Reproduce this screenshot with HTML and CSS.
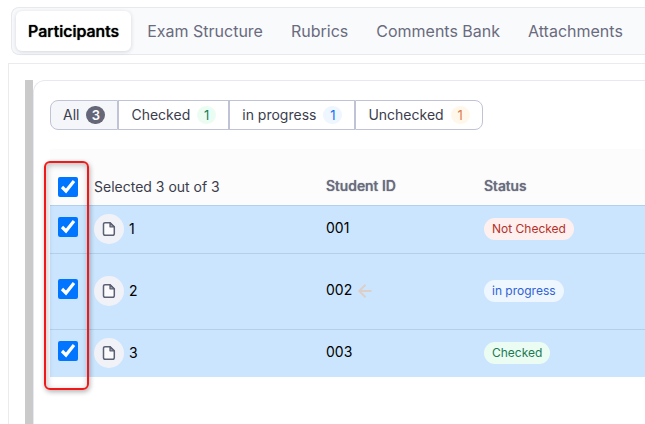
FILE: index.html
```html
<!DOCTYPE html>
<html lang="en">
<head>
<meta charset="utf-8">
<title>Participants</title>
<link rel="stylesheet" href="styles.css">
</head>
<body>
<svg class="sprite" aria-hidden="true">
  <symbol id="file" viewBox="0 0 14 16">
    <path d="M3 1.700h5l4.300 4.300v6.800a1.500 1.500 0 0 1-1.500 1.500H3a1.500 1.500 0 0 1-1.500-1.500V3.200A1.500 1.500 0 0 1 3 1.700z" fill="#fbfbfd" stroke="#5c6073" stroke-width="1.500"/>
    <path d="M8 1.700V5.800h4.300z" fill="#a5a9b6" stroke="#5c6073" stroke-width="1.300" stroke-linejoin="round"/>
  </symbol>
</svg>
<nav class="tabs">
  <button class="tab tab-active" type="button">Participants</button>
  <button class="tab" type="button">Exam Structure</button>
  <button class="tab" type="button">Rubrics</button>
  <button class="tab" type="button">Comments Bank</button>
  <button class="tab" type="button">Attachments</button>
</nav>
<main class="panel">
  <div class="rail"></div>
  <section class="card">
    <div class="filters">
      <button class="filter filter-active" type="button">All <span class="count count-all">3</span></button>
      <button class="filter" type="button">Checked <span class="count count-green">1</span></button>
      <button class="filter" type="button">in progress <span class="count count-blue">1</span></button>
      <button class="filter" type="button">Unchecked <span class="count count-amber">1</span></button>
    </div>
    <div class="table-wrap">
      <table>
        <thead>
          <tr>
            <th class="col-check"><input type="checkbox" aria-label="Select all" checked></th>
            <th class="col-name">Selected 3 out of 3</th>
            <th class="col-id">Student ID</th>
            <th>Status</th>
          </tr>
        </thead>
        <tbody>
          <tr>
            <td class="col-check"><input type="checkbox" aria-label="Select participant 1" checked></td>
            <td><div class="name"><span class="doc"><svg class="doc-icon"><use href="#file"/></svg></span>1</div></td>
            <td class="id">001</td>
            <td><span class="pill pill-red">Not Checked</span></td>
          </tr>
          <tr class="row-tall">
            <td class="col-check"><input type="checkbox" aria-label="Select participant 2" checked></td>
            <td><div class="name"><span class="doc"><svg class="doc-icon"><use href="#file"/></svg></span>2</div></td>
            <td class="id">002<svg class="arrow" viewBox="0 0 14 14"><path d="M13.500 7H1M7.500 0.700L1.200 7l6.300 6.300" fill="none" stroke="#dccfc8" stroke-width="2"/></svg></td>
            <td><span class="pill pill-blue">in progress</span></td>
          </tr>
          <tr>
            <td class="col-check"><input type="checkbox" aria-label="Select participant 3" checked></td>
            <td><div class="name"><span class="doc"><svg class="doc-icon"><use href="#file"/></svg></span>3</div></td>
            <td class="id">003</td>
            <td><span class="pill pill-green">Checked</span></td>
          </tr>
        </tbody>
      </table>
      <div class="highlight"></div>
    </div>
  </section>
</main>
</body>
</html>
```
FILE: styles.css
```css
* { box-sizing: border-box; }

body {
  margin: 0;
  padding: 7px 0 0 8px;
  min-height: 100vh;
  display: flex;
  flex-direction: column;
  overflow: hidden;
  background: #fff;
  color: #000;
  font: 14px/20px Inter, "Liberation Sans", sans-serif;
}

button { font: inherit; cursor: pointer; }

.sprite { display: none; }

.tabs {
  display: flex;
  gap: 4px;
  margin-left: 3px;
  padding: 3px 4px;
  border: 1px solid #e7e8f0;
  border-right: 0;
  border-radius: 8px 0 0 8px;
  background: #f9fafc;
}

.tab {
  height: 40px;
  padding: 0 12px;
  border: 0;
  border-radius: 6px;
  background: none;
  color: #696b7e;
  font-size: 16px;
  white-space: nowrap;
}

.tab-active {
  background: #fff;
  color: #000;
  font-weight: 500;
  text-shadow: 0 0 1px currentColor;
  box-shadow: 0 1px 4px rgba(16, 24, 40, 0.16);
}

.panel {
  flex: 1;
  display: flex;
  margin-top: 8px;
  padding: 16px 0 0 16px;
  border: 1px solid #ebebee;
  border-width: 1px 0 0 1px;
}

.rail { width: 8px; background: #cacaca; }

.card {
  flex: 1;
  padding: 19px 0 0 16px;
  border: 1px solid #e7e8f0;
  border-width: 1px 0 0 1px;
  border-radius: 12px 0 0 0;
}

.filters { display: flex; }

.filter {
  display: flex;
  align-items: center;
  gap: 7px;
  height: 30px;
  padding: 0 12px;
  border: 1px solid #c0c3d5;
  background: #fff;
  color: #3b3d4d;
  white-space: nowrap;
}

.filter:first-child { border-radius: 8px 0 0 8px; }
.filter:last-child { border-radius: 0 8px 8px 0; }
.filter-active { background: #f5f6f9; }

.count {
  width: 19px;
  border-radius: 9px;
  font-size: 13px;
  line-height: 18px;
  text-align: center;
}

.count-all { background: #656779; color: #fff; font-weight: 600; }
.count-green { background: #ebfdf3; color: #12805c; }
.count-blue { background: #eef6ff; color: #1570ef; }
.count-amber { background: #fff8ea; color: #dc7a4a; }

.table-wrap { position: relative; margin-top: 19px; }

table {
  width: 100%;
  table-layout: fixed;
  border-collapse: separate;
  border-spacing: 0;
}

th, td { padding: 0; text-align: left; vertical-align: middle; }

th {
  height: 57px;
  padding-top: 18px;
  border-bottom: 1px solid #b4cfeb;
  background: #fcfcfc;
  color: #696b7e;
  font-weight: 500;
  text-shadow: 0 0 1px currentColor;
}

td {
  height: 48px;
  padding-bottom: 2px;
  border-bottom: 1px solid #b4cfeb;
  background: #cbe5fe;
}

.row-tall td { height: 76px; }
tbody tr:last-child td { height: 47px; border-bottom: 0; }

.col-check { width: 44px; padding-left: 8px; }
.col-name { width: 232px; color: #3b3d4d; font-weight: 400; text-shadow: none; }
.col-id { width: 158px; }

th.col-check, th.col-name { padding-top: 20px; }

input[type="checkbox"] {
  display: block;
  width: 20px;
  height: 20px;
  margin: 0;
  accent-color: #0075ff;
}

td.col-check { padding-bottom: 6px; }
td.id { padding-bottom: 4px; }

.name { display: flex; align-items: center; gap: 5px; }

.doc {
  display: flex;
  align-items: center;
  justify-content: center;
  width: 30px;
  height: 30px;
  border-radius: 50%;
  background: #f1f2f7;
}

.doc-icon { width: 14px; height: 16px; }

.arrow { width: 14px; height: 14px; margin-left: 6px; vertical-align: -3px; }

.pill {
  display: inline-block;
  padding: 0 8px;
  border-radius: 11px;
  font-size: 12px;
  line-height: 22px;
  vertical-align: middle;
}

.pill-red { background: #fef0ef; color: #b5302a; }
.pill-blue { background: #eef6ff; color: #2f62d4; }
.pill-green { background: #ebfdf3; color: #1c7a53; }

.highlight {
  position: absolute;
  top: 12px;
  bottom: -13px;
  left: -6px;
  width: 45px;
  border: 2px solid #f01818;
  border-radius: 6px;
  box-shadow: 1px 2px 5px rgba(0, 0, 0, 0.3), inset 1px 2px 6px rgba(0, 0, 0, 0.25);
  pointer-events: none;
}
```
